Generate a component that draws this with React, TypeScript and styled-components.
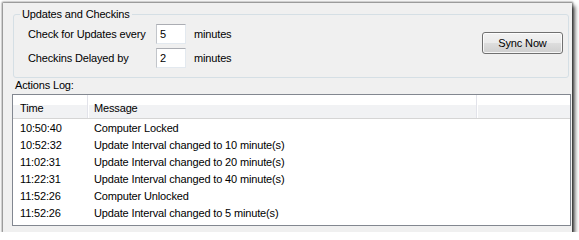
import React from "react";
import styled, { createGlobalStyle } from "styled-components";

const GlobalStyle = createGlobalStyle`
  html, body { margin: 0; padding: 0; background: #ffffff; }
  body {
    font-family: "Liberation Sans", Arial, sans-serif;
    font-size: 11px;
    letter-spacing: -0.15px;
    color: #000;
  }
  * { box-sizing: border-box; }
`;

const Window = styled.div`
  margin: 3px 0 0 3px;
  width: 569px;
  height: 229px;
  background: #f0f0f0;
  box-shadow: 0 0 2px 1px rgba(0, 0, 0, 0.55), 3px 3px 4px rgba(0, 0, 0, 0.65);
  display: flex;
  flex-direction: column;
  overflow: hidden;
`;

const GroupBox = styled.div`
  margin: 11px 0 0 10px;
  width: 556px;
  border: 1px solid #d5dfe5;
  border-radius: 3px;
  padding: 0 5px 9px 14px;
`;

const Legend = styled.div`
  width: fit-content;
  margin: -7px 0 0 -8px;
  padding: 0 2px;
  line-height: 13px;
  background: #f0f0f0;
`;

const GroupBody = styled.div`
  display: flex;
  align-items: flex-start;
  margin-top: 3px;
`;

const Fields = styled.div`
  display: grid;
  grid-template-columns: 128px 30px auto;
  row-gap: 4px;
  align-items: center;
`;

const FieldLabel = styled.span`
  line-height: 20px;
`;

const TextBox = styled.div`
  width: 30px;
  height: 20px;
  background: #fff;
  border: 1px solid #e3e9ef;
  border-top-color: #abadb3;
  border-left-color: #c2c5ca;
  padding-left: 3px;
  line-height: 18px;
`;

const Unit = styled.span`
  margin-left: 8px;
  line-height: 20px;
`;

const Button = styled.button`
  margin: 8px 0 0 auto;
  width: 81px;
  height: 22px;
  border: 1px solid #707070;
  border-radius: 3px;
  background: linear-gradient(#f2f2f2 0%, #ebebeb 48%, #dddddd 52%, #cfcfcf 100%);
  box-shadow: inset 0 0 0 1px rgba(255, 255, 255, 0.8);
  font: inherit;
  letter-spacing: inherit;
  color: #000;
  padding: 0;
  line-height: 18px;
`;

const LogLabel = styled.div`
  margin: 1px 0 0 12px;
  line-height: 13px;
`;

const ListView = styled.div`
  margin: 2px 0 0 9px;
  width: 559px;
  height: 132px;
  border: 1px solid #828790;
  background: #fff;
`;

const Header = styled.div`
  display: grid;
  grid-template-columns: 75px 389px 1fr;
  height: 24px;
  border-bottom: 1px solid #d5d5d5;
  background: linear-gradient(#ffffff 0, #ffffff 10px, #f1f2f4 10px, #f1f2f4 100%);
`;

const HeaderCell = styled.div<{ $pad: number; $sep?: boolean }>`
  padding: 3px 0 0 ${(p) => p.$pad}px;
  line-height: 20px;
  border-right: ${(p) => (p.$sep ? "1px solid #e2e3ea" : "none")};
  box-shadow: ${(p) => (p.$sep ? "1px 0 0 #ffffff" : "none")};
`;

const Rows = styled.div`
  padding-top: 1px;
`;

const Row = styled.div`
  display: grid;
  grid-template-columns: 75px 389px 1fr;
  line-height: 17px;
`;

const Cell = styled.div<{ $pad: number }>`
  padding-left: ${(p) => p.$pad}px;
  white-space: nowrap;
`;

const log: [string, string][] = [
  ["10:50:40", "Computer Locked"],
  ["10:52:32", "Update Interval changed to 10 minute(s)"],
  ["11:02:31", "Update Interval changed to 20 minute(s)"],
  ["11:22:31", "Update Interval changed to 40 minute(s)"],
  ["11:52:26", "Computer Unlocked"],
  ["11:52:26", "Update Interval changed to 5 minute(s)"],
];

export default function App() {
  return (
    <>
      <GlobalStyle />
      <Window>
        <GroupBox>
          <Legend>Updates and Checkins</Legend>
          <GroupBody>
            <Fields>
              <FieldLabel>Check for Updates every</FieldLabel>
              <TextBox>5</TextBox>
              <Unit>minutes</Unit>
              <FieldLabel>Checkins Delayed by</FieldLabel>
              <TextBox>2</TextBox>
              <Unit>minutes</Unit>
            </Fields>
            <Button>Sync Now</Button>
          </GroupBody>
        </GroupBox>
        <LogLabel>Actions Log:</LogLabel>
        <ListView>
          <Header>
            <HeaderCell $pad={7} $sep>Time</HeaderCell>
            <HeaderCell $pad={6} $sep>Message</HeaderCell>
            <HeaderCell $pad={6} />
          </Header>
          <Rows>
            {log.map(([t, m], i) => (
              <Row key={i}>
                <Cell $pad={7}>{t}</Cell>
                <Cell $pad={6}>{m}</Cell>
                <Cell $pad={6} />
              </Row>
            ))}
          </Rows>
        </ListView>
      </Window>
    </>
  );
}
